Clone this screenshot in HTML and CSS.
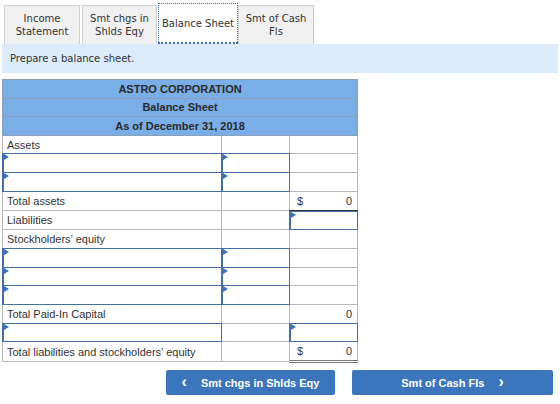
FILE: index.html
```html
<!DOCTYPE html>
<html>
<head>
<meta charset="utf-8">
<link rel="stylesheet" href="styles.css">
</head>
<body>
<div class="tabs">
  <div class="tab">Income<br>Statement</div>
  <div class="tab">Smt chgs in<br>Shlds Eqy</div>
  <div class="tab active">Balance Sheet</div>
  <div class="tab">Smt of Cash<br>Fls</div>
</div>
<div class="prompt">Prepare a balance sheet.</div>
<table class="sheet">
  <colgroup><col class="c1"><col class="c2"><col class="c3"></colgroup>
  <tr class="head"><td colspan="3">ASTRO CORPORATION</td></tr>
  <tr class="head"><td colspan="3">Balance Sheet</td></tr>
  <tr class="head"><td colspan="3">As of December 31, 2018</td></tr>
  <tr><td class="label">Assets</td><td></td><td></td></tr>
  <tr><td class="in"><div class="box"></div></td><td class="in"><div class="box"></div></td><td></td></tr>
  <tr><td class="in"><div class="box"></div></td><td class="in"><div class="box"></div></td><td></td></tr>
  <tr><td class="label">Total assets</td><td></td><td class="amt total1"><span>$</span><span>0</span></td></tr>
  <tr><td class="label">Liabilities</td><td></td><td class="in"><div class="box"></div></td></tr>
  <tr><td class="label">Stockholders’ equity</td><td></td><td></td></tr>
  <tr><td class="in"><div class="box"></div></td><td class="in"><div class="box"></div></td><td></td></tr>
  <tr><td class="in"><div class="box"></div></td><td class="in"><div class="box"></div></td><td></td></tr>
  <tr><td class="in"><div class="box"></div></td><td class="in"><div class="box"></div></td><td></td></tr>
  <tr><td class="label">Total Paid-In Capital</td><td></td><td class="amt"><span></span><span>0</span></td></tr>
  <tr><td class="in"><div class="box"></div></td><td></td><td class="in"><div class="box"></div></td></tr>
  <tr><td class="label">Total liabilities and stockholders’ equity</td><td></td><td class="amt total2"><span>$</span><span>0</span></td></tr>
</table>
<div class="nav">
  <button class="btn prev"><span class="chev">&lsaquo;</span>Smt chgs in Shlds Eqy</button>
  <button class="btn next">Smt of Cash Fls<span class="chev">&rsaquo;</span></button>
</div>
</body>
</html>
```
FILE: styles.css
```css
html, body {
  margin: 0;
  padding: 0;
  background: #fff;
}
body {
  width: 560px;
  height: 404px;
  overflow: hidden;
  font-family: "Liberation Sans", Arial, sans-serif;
}
.tabs {
  display: flex;
  align-items: flex-end;
  padding: 3px 0 0 4px;
  height: 44px;
  box-sizing: border-box;
}
.tab {
  box-sizing: border-box;
  height: 39px;
  width: 76px;
  margin-right: 2px;
  background: #f0f0f0;
  border: 1px solid #cfcfcf;
  border-bottom: none;
  font-family: "DejaVu Sans", Verdana, sans-serif;
  font-size: 10px;
  line-height: 13px;
  color: #333;
  display: flex;
  align-items: center;
  justify-content: center;
  text-align: center;
}
.tab:nth-child(2) { width: 75px; margin-right: 1px; }
.tab.active {
  width: 80px;
  height: 41px;
  margin-right: 0;
  background: #fff;
  border: 1px dotted #3a6fc0;
  border-bottom: 2px dotted #3a6fc0;
}
.tab:nth-child(4) { width: 76px; }
.prompt {
  margin: 0 2px;
  height: 29px;
  background: #dcebf9;
  font-family: "DejaVu Sans", Verdana, sans-serif;
  font-size: 10px;
  color: #333;
  padding-left: 8px;
  display: flex;
  align-items: center;
}
.sheet {
  margin: 6px 0 0 2px;
  border-collapse: collapse;
  width: 356px;
  table-layout: fixed;
  font-size: 11px;
  color: #333;
}
.c1 { width: 219px; }
.c2 { width: 68px; }
.c3 { width: 68px; }
.sheet td {
  border: 1px solid #b8b8b8;
  height: 17.7px;
  padding: 0;
  position: relative;
}
.sheet tr.head td {
  background: #7aaee6;
  border-color: #8a9fb8;
  text-align: center;
  font-weight: bold;
  color: #2b2b2b;
  height: 17.6px;
}
.sheet td.label {
  padding-left: 4px;
  white-space: nowrap;
}
.sheet td.in {
  padding: 0;
}
.box {
  position: absolute;
  inset: -1px;
  border: 1px solid #4370ab;
  border-left-width: 2px;
}
.box::before {
  content: "";
  position: absolute;
  top: 0;
  left: 0;
  border-left: 5px solid #3d6fc0;
  border-top: 3px solid transparent;
  border-bottom: 3px solid transparent;
}
.sheet td.amt {
  padding: 0 5px 0 7px;
}
.amt span {
  display: inline-block;
}
.amt span:last-child {
  float: right;
}
.sheet td.total1 {
  border-bottom: 2px solid #333;
}
.sheet td.total2 {
  border-bottom: 3px double #777;
}
.nav {
  display: flex;
  justify-content: flex-end;
  gap: 17px;
  padding: 7px 7px 0 0;
}
.btn {
  height: 25px;
  border: none;
  border-radius: 2px;
  background: #3b76bd;
  color: #fff;
  font-family: "Liberation Sans", Arial, sans-serif;
  font-weight: bold;
  font-size: 11px;
  display: flex;
  align-items: center;
  justify-content: center;
  padding: 0;
}
.btn.prev { width: 169px; }
.btn.next { width: 201px; }
.chev {
  font-size: 16px;
  line-height: 1;
  margin-top: -2px;
}
.prev .chev { margin-right: 14px; }
.next .chev { margin-left: 14px; }
```
